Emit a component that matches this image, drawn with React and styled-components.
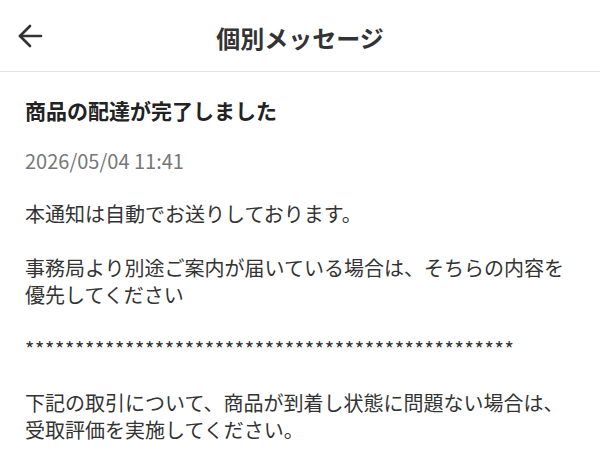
import React from "react";
import styled, { createGlobalStyle } from "styled-components";

const Global = createGlobalStyle`
  html, body { margin: 0; padding: 0; background: #fff; }
  body { font-family: "Noto Sans CJK JP", "Noto Sans", sans-serif; color: #333; }
`;

const Page = styled.div`
  width: 600px;
  height: 454px;
  overflow: hidden;
  background: #fff;
`;

const Header = styled.header`
  height: 72px;
  border-bottom: 1px solid #e3e3e3;
  display: grid;
  grid-template-columns: 60px 1fr 60px;
  align-items: center;
  box-sizing: border-box;
`;

const BackButton = styled.button`
  border: 0;
  background: none;
  padding: 0 0 0 17px;
  margin: 0;
  height: 72px;
  display: flex;
  align-items: center;
  color: #333;
  cursor: pointer;
`;

const Title = styled.h1`
  margin: 0;
  text-align: center;
  font-size: 24px;
  font-weight: 700;
  color: #333;
  line-height: 1;
  padding-top: 4px;
`;

const Content = styled.main`
  padding: 24px 25px 0;
`;

const Heading = styled.h2`
  margin: 0;
  font-size: 21px;
  line-height: 28px;
  font-weight: 700;
  color: #222;
`;

const DateText = styled.div`
  margin-top: 24px;
  font-size: 20px;
  line-height: 26px;
  color: #777;
`;

const Body = styled.div`
  margin-top: 26px;
  font-size: 20px;
  line-height: 27px;
  color: #333;
`;

const Para = styled.p`
  margin: 0 0 27px;
`;

const Stars = styled.p`
  margin: 0 0 27px;
  font-size: 20px;
  letter-spacing: 0.65px;
  white-space: nowrap;
`;

function BackArrow() {
  return (
    <svg width="26" height="26" viewBox="0 0 26 26" fill="none" stroke="currentColor" strokeWidth="2.7" strokeLinecap="round" strokeLinejoin="round">
      <path d="M24 13H3" />
      <path d="M13 3L3 13l10 10" />
    </svg>
  );
}

export default function App() {
  return (
    <Page>
      <Global />
      <Header>
        <BackButton aria-label="戻る">
          <BackArrow />
        </BackButton>
        <Title>個別メッセージ</Title>
        <div />
      </Header>
      <Content>
        <Heading>商品の配達が完了しました</Heading>
        <DateText>2026/05/04 11:41</DateText>
        <Body>
          <Para>本通知は自動でお送りしております。</Para>
          <Para>
            事務局より別途ご案内が届いている場合は、そちらの内容を
            <br />
            優先してください
          </Para>
          <Stars>{"*".repeat(49)}</Stars>
          <Para>
            下記の取引について、商品が到着し状態に問題ない場合は、
            <br />
            受取評価を実施してください。
          </Para>
        </Body>
      </Content>
    </Page>
  );
}
